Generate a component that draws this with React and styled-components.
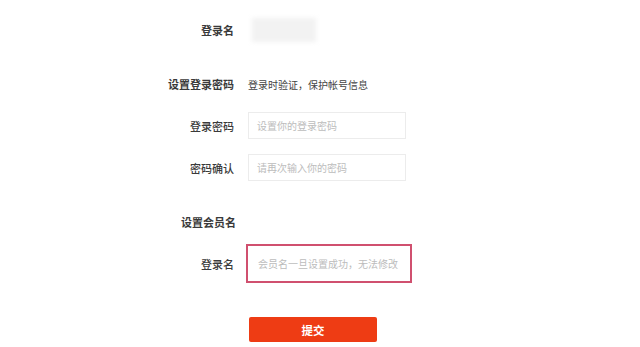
import React from "react";
import styled, { createGlobalStyle } from "styled-components";

const GlobalStyle = createGlobalStyle`
  html, body {
    margin: 0;
    padding: 0;
    background: #fff;
  }
  body {
    font-family: "Noto Sans CJK SC", "Noto Sans", sans-serif;
  }
`;

const Page = styled.div`
  width: 640px;
  height: 347px;
  overflow: hidden;
  background: #fff;
`;

const Form = styled.div`
  display: flex;
  flex-direction: column;
  padding-left: 150px;
`;

const Row = styled.div`
  display: flex;
  align-items: center;
  height: ${props => props.$h}px;
  margin-top: ${props => props.$mt}px;
`;

const Label = styled.div`
  width: 84px;
  margin-right: 14px;
  text-align: right;
  font-size: 11px;
  font-weight: ${props => (props.$strong ? 700 : 500)};
  color: #3a3a3a;
  white-space: nowrap;
  flex-shrink: 0;
`;

const Heading = styled(Label)`
  margin-right: 0;
  width: 86px;
`;

const Hint = styled.div`
  font-size: 10px;
  color: #444;
  white-space: nowrap;
`;

const Blurred = styled.div`
  width: 64px;
  height: 24px;
  margin-left: 4px;
  background: #f2f2f2;
  filter: blur(2px);
`;

const Field = styled.div`
  box-sizing: border-box;
  width: ${props => props.$w}px;
  height: 100%;
  margin-left: ${props => props.$ml || 0}px;
  display: flex;
  align-items: center;
  padding-left: ${props => props.$pl || 8}px;
  border: ${props => (props.$focus ? "2px solid #d0506f" : "1px solid #ececec")};
  background: #fff;
  font-size: 10px;
  color: #bcbcbc;
  white-space: nowrap;
`;

const Submit = styled.button`
  width: 128px;
  height: 25px;
  margin-left: 1px;
  border: none;
  border-radius: 2px;
  background: #ee3c14;
  color: #fff;
  font-family: "Noto Sans CJK SC", sans-serif;
  font-size: 11.5px;
  font-weight: 700;
  padding: 0;
`;

export default function App() {
  return (
    <Page>
      <GlobalStyle />
      <Form>
        <Row $h={26} $mt={17}>
          <Label $strong>登录名</Label>
          <Blurred />
        </Row>
        <Row $h={20} $mt={31}>
          <Label $strong>设置登录密码</Label>
          <Hint>登录时验证，保护帐号信息</Hint>
        </Row>
        <Row $h={27} $mt={18}>
          <Label>登录密码</Label>
          <Field $w={158}>设置你的登录密码</Field>
        </Row>
        <Row $h={27} $mt={15}>
          <Label>密码确认</Label>
          <Field $w={158}>请再次输入你的密码</Field>
        </Row>
        <Row $h={20} $mt={31}>
          <Heading $strong>设置会员名</Heading>
        </Row>
        <Row $h={39} $mt={12}>
          <Label>登录名</Label>
          <Field $w={166} $ml={-2} $pl={10} $focus>
            会员名一旦设置成功，无法修改
          </Field>
        </Row>
        <Row $h={25} $mt={34}>
          <Label />
          <Submit>提交</Submit>
        </Row>
      </Form>
    </Page>
  );
}
